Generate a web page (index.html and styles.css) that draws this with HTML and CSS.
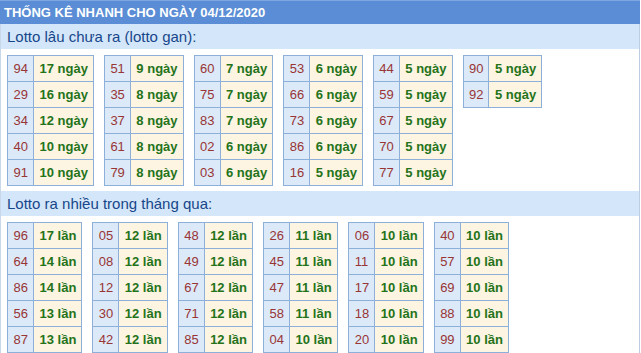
FILE: index.html
```html
<!DOCTYPE html>
<html lang="vi">
<head>
<meta charset="utf-8">
<title>Thống kê nhanh</title>
<link rel="stylesheet" href="styles.css">
</head>
<body>
<div class="box">
  <div class="head">THỐNG KÊ NHANH CHO NGÀY 04/12/2020</div>
  <div class="body">
    <div class="band">Lotto lâu chưa ra (lotto gan):</div>
    <div class="tables">
      <table><tr><td class="n">94</td><td class="v">17 ngày</td></tr><tr><td class="n">29</td><td class="v">16 ngày</td></tr><tr><td class="n">34</td><td class="v">12 ngày</td></tr><tr><td class="n">40</td><td class="v">10 ngày</td></tr><tr><td class="n">91</td><td class="v">10 ngày</td></tr></table>
      <table><tr><td class="n">51</td><td class="v">9 ngày</td></tr><tr><td class="n">35</td><td class="v">8 ngày</td></tr><tr><td class="n">37</td><td class="v">8 ngày</td></tr><tr><td class="n">61</td><td class="v">8 ngày</td></tr><tr><td class="n">79</td><td class="v">8 ngày</td></tr></table>
      <table><tr><td class="n">60</td><td class="v">7 ngày</td></tr><tr><td class="n">75</td><td class="v">7 ngày</td></tr><tr><td class="n">83</td><td class="v">7 ngày</td></tr><tr><td class="n">02</td><td class="v">6 ngày</td></tr><tr><td class="n">03</td><td class="v">6 ngày</td></tr></table>
      <table><tr><td class="n">53</td><td class="v">6 ngày</td></tr><tr><td class="n">66</td><td class="v">6 ngày</td></tr><tr><td class="n">73</td><td class="v">6 ngày</td></tr><tr><td class="n">86</td><td class="v">6 ngày</td></tr><tr><td class="n">16</td><td class="v">5 ngày</td></tr></table>
      <table><tr><td class="n">44</td><td class="v">5 ngày</td></tr><tr><td class="n">59</td><td class="v">5 ngày</td></tr><tr><td class="n">67</td><td class="v">5 ngày</td></tr><tr><td class="n">70</td><td class="v">5 ngày</td></tr><tr><td class="n">77</td><td class="v">5 ngày</td></tr></table>
      <table><tr><td class="n">90</td><td class="v">5 ngày</td></tr><tr><td class="n">92</td><td class="v">5 ngày</td></tr></table>
    </div>
    <div class="band">Lotto ra nhiều trong tháng qua:</div>
    <div class="tables">
      <table><tr><td class="n">96</td><td class="v">17 lần</td></tr><tr><td class="n">64</td><td class="v">14 lần</td></tr><tr><td class="n">86</td><td class="v">14 lần</td></tr><tr><td class="n">56</td><td class="v">13 lần</td></tr><tr><td class="n">87</td><td class="v">13 lần</td></tr></table>
      <table><tr><td class="n">05</td><td class="v">12 lần</td></tr><tr><td class="n">08</td><td class="v">12 lần</td></tr><tr><td class="n">12</td><td class="v">12 lần</td></tr><tr><td class="n">30</td><td class="v">12 lần</td></tr><tr><td class="n">42</td><td class="v">12 lần</td></tr></table>
      <table><tr><td class="n">48</td><td class="v">12 lần</td></tr><tr><td class="n">49</td><td class="v">12 lần</td></tr><tr><td class="n">67</td><td class="v">12 lần</td></tr><tr><td class="n">71</td><td class="v">12 lần</td></tr><tr><td class="n">85</td><td class="v">12 lần</td></tr></table>
      <table><tr><td class="n">26</td><td class="v">11 lần</td></tr><tr><td class="n">45</td><td class="v">11 lần</td></tr><tr><td class="n">47</td><td class="v">11 lần</td></tr><tr><td class="n">58</td><td class="v">11 lần</td></tr><tr><td class="n">04</td><td class="v">10 lần</td></tr></table>
      <table><tr><td class="n">06</td><td class="v">10 lần</td></tr><tr><td class="n">11</td><td class="v">10 lần</td></tr><tr><td class="n">17</td><td class="v">10 lần</td></tr><tr><td class="n">18</td><td class="v">10 lần</td></tr><tr><td class="n">20</td><td class="v">10 lần</td></tr></table>
      <table><tr><td class="n">40</td><td class="v">10 lần</td></tr><tr><td class="n">57</td><td class="v">10 lần</td></tr><tr><td class="n">69</td><td class="v">10 lần</td></tr><tr><td class="n">88</td><td class="v">10 lần</td></tr><tr><td class="n">99</td><td class="v">10 lần</td></tr></table>
    </div>
  </div>
</div>
</body>
</html>
```
FILE: styles.css
```css
html, body {
  margin: 0;
  padding: 0;
  background: #ffffff;
}
body {
  font-family: "Liberation Sans", Arial, sans-serif;
}
.box {
  width: 640px;
}
.head {
  height: 23px;
  line-height: 23px;
  border-top: 1px solid #7fa7df;
  background: #5a8dd5;
  color: #ffffff;
  font-weight: bold;
  font-size: 13px;
  padding-left: 4px;
}
.body {
  border-left: 1px solid #c8d8ea;
  border-right: 1px solid #bccde2;
}
.band {
  height: 25px;
  line-height: 25px;
  background: #d4e6f9;
  color: #17478a;
  font-size: 15px;
  padding-left: 6px;
}
.tables {
  display: flex;
  align-items: flex-start;
  gap: 10px;
  padding: 6px 0 5px 6px;
}
table {
  border-collapse: separate;
  border-spacing: 0;
  border-left: 1px solid #8db0da;
  border-top: 1px solid #8db0da;
  font-size: 13px;
}
td {
  line-height: 25px;
  padding: 0 5px 0 5.5px;
  border-right: 1px solid #8db0da;
  border-bottom: 1px solid #8db0da;
  white-space: nowrap;
}
td.n {
  background: #dce9f8;
  color: #983535;
}
td.v {
  background: #fdf4e2;
  color: #24731a;
  font-weight: bold;
}
```
